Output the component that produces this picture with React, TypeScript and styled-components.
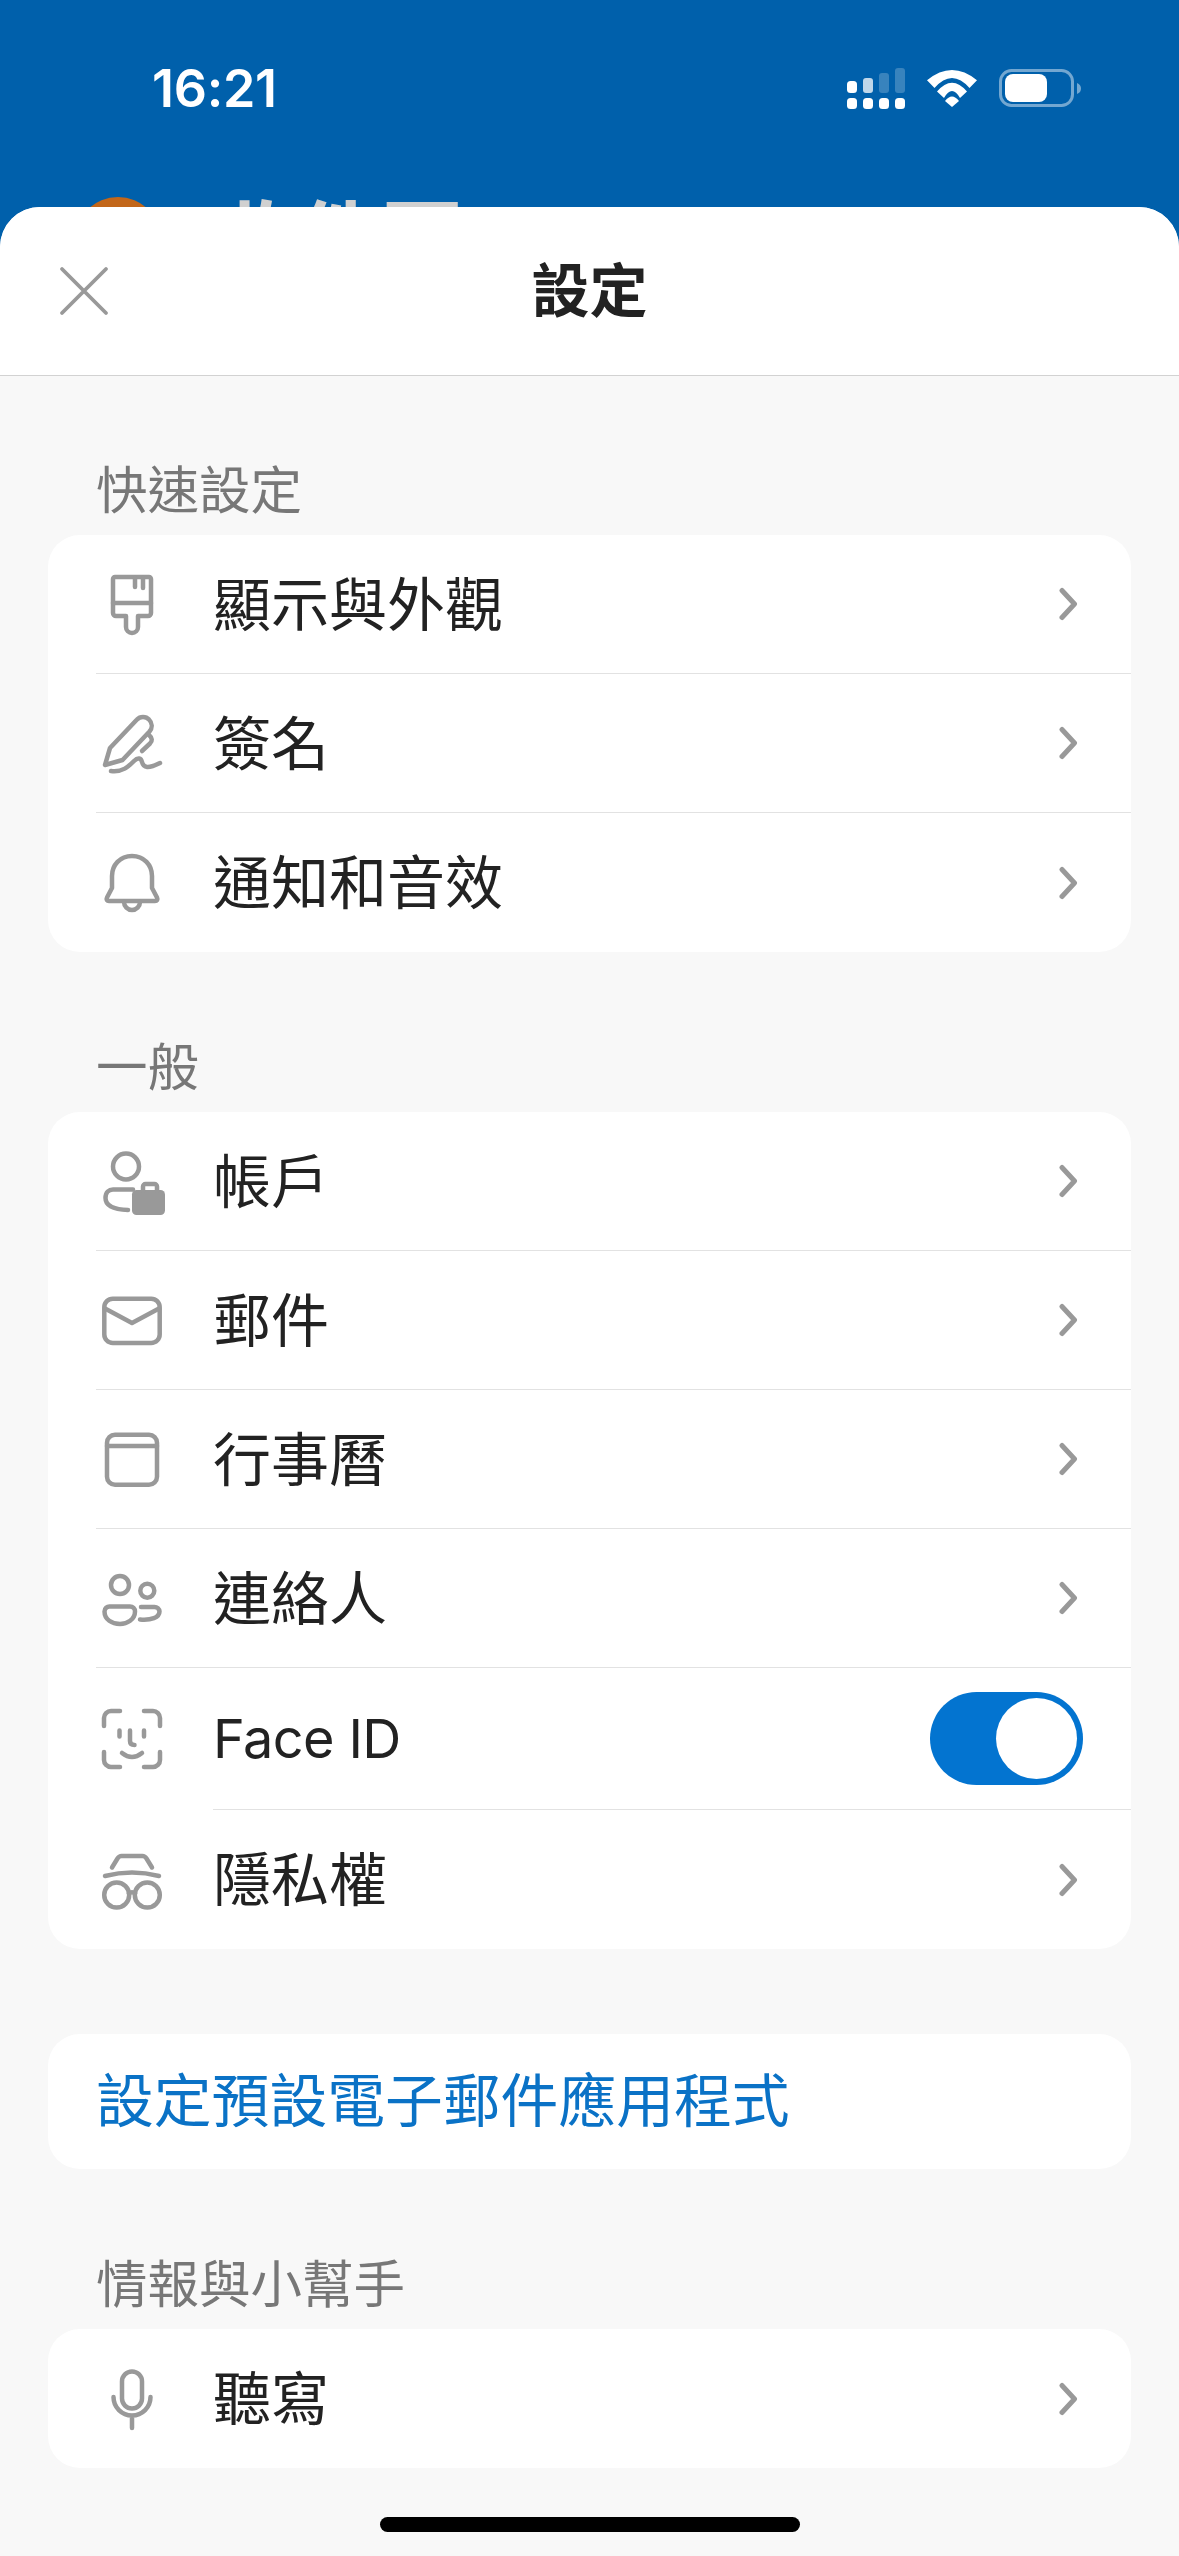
import React from 'react'
import styled, { createGlobalStyle } from 'styled-components'

const GlobalStyle = createGlobalStyle`
  html, body {
    margin: 0;
    padding: 0;
    background: #0060ab;
  }
  * { box-sizing: border-box; }
`

const Page = styled.div`
  position: relative;
  width: 1179px;
  height: 2556px;
  overflow: hidden;
  background: #0060ab;
  font-family: Inter, "Noto Sans CJK TC", sans-serif;
`

const TopBar = styled.div`
  height: 207px;
  overflow: hidden;
  padding-top: 58px;
`

const StatusBar = styled.div`
  display: flex;
  align-items: center;
  justify-content: space-between;
  height: 60px;
  padding: 0 98px 0 152px;
`

const Time = styled.span`
  padding-top: 2px;
  color: #fff;
  font-size: 52px;
  font-weight: 600;
  letter-spacing: -0.3px;
  line-height: 60px;
`

const StatusIcons = styled.div`
  display: flex;
  align-items: center;
  gap: 22px;
`

const AccountPeek = styled.div`
  display: flex;
  align-items: flex-start;
  gap: 53px;
  margin-top: 79px;
  padding-left: 75px;
`

const Avatar = styled.div`
  width: 86px;
  height: 86px;
  border-radius: 50%;
  background: #c26619;
`

const PeekTitle = styled.span`
  color: #d0d0d0;
  font-size: 83px;
  font-weight: 700;
  line-height: 83px;
  margin-top: 2px;
`

const Sheet = styled.div`
  height: 2349px;
  border-radius: 40px 40px 0 0;
  background: #f8f8f8;
  overflow: hidden;
`

const SheetHeader = styled.header`
  display: grid;
  grid-template-columns: 1fr auto 1fr;
  align-items: center;
  height: 169px;
  background: #fff;
  border-bottom: 1px solid #d2d2d2;
`

const CloseIcon = styled.svg`
  width: 50px;
  height: 50px;
  margin-left: 59px;
  stroke: #999;
  stroke-width: 3.8;
  stroke-linecap: round;
  fill: none;
`

const SheetTitle = styled.h1`
  margin: 0;
  color: #222;
  font-size: 58px;
  font-weight: 700;
  line-height: 70px;
`

const Content = styled.div`
  display: flex;
  flex-direction: column;
  padding: 83px 48px 0;
`

const SectionLabel = styled.div`
  height: 60px;
  margin: 0 0 16px 48px;
  padding-top: 1px;
  color: #777;
  font-size: 51.5px;
  line-height: 60px;
`

const Card = styled.div<{ $gap?: number }>`
  display: flex;
  flex-direction: column;
  margin-bottom: ${p => p.$gap ?? 84}px;
  border-radius: 32px;
  background: #fff;
`

const Row = styled.div<{ $tall?: boolean }>`
  display: flex;
  align-items: center;
  height: ${p => (p.$tall ? 141 : 138)}px;
  padding: 0 48px;
  &:last-child { height: 139px; }
`

const Separator = styled.div<{ $inset: number }>`
  height: 1px;
  margin-left: ${p => p.$inset}px;
  background: #e2e2e2;
`

const IconBox = styled.svg`
  flex: none;
  width: 72px;
  height: 72px;
  margin-right: 45px;
  stroke: #999;
  stroke-width: 4.5;
  stroke-linecap: round;
  stroke-linejoin: round;
  fill: none;
`

const RowLabel = styled.span`
  flex: 1;
  padding-top: 1px;
  color: #222;
  font-size: 58px;
  line-height: 70px;
`

const LatinLabel = styled(RowLabel)`
  padding-top: 0;
  font-size: 54px;
  letter-spacing: -0.6px;
`

const Chevron = styled.svg`
  flex: none;
  width: 24px;
  height: 36px;
  stroke: #999;
  stroke-width: 5;
  stroke-linecap: round;
  stroke-linejoin: round;
  fill: none;
`

const Toggle = styled.div`
  display: flex;
  justify-content: flex-end;
  width: 153px;
  height: 93px;
  padding: 6px;
  border-radius: 47px;
  background: #0374d0;
`

const ToggleKnob = styled.div`
  width: 81px;
  height: 81px;
  border-radius: 50%;
  background: #fff;
`

const LinkRow = styled.div`
  height: 135px;
  padding-left: 48px;
  color: #0a72c6;
  font-size: 57.8px;
  line-height: 135px;
`

const HomeIndicator = styled.div`
  position: absolute;
  left: 380px;
  bottom: 24px;
  width: 420px;
  height: 15px;
  border-radius: 8px;
  background: #000;
`

const SignalIcon = () => (
  <svg width="58" height="41" viewBox="0 0 58 41" fill="#fff">
    <rect x="0" y="30" width="10" height="11" rx="3.5" />
    <rect x="16" y="30" width="10" height="11" rx="3.5" />
    <rect x="32" y="30" width="10" height="11" rx="3.5" />
    <rect x="48" y="30" width="10" height="11" rx="3.5" />
    <rect x="0" y="13" width="10" height="12" rx="3.5" />
    <rect x="16" y="10" width="10" height="15" rx="3" opacity="0.75" />
    <rect x="32" y="5" width="10" height="20" rx="3" opacity="0.22" />
    <rect x="48" y="0" width="10" height="25" rx="3" opacity="0.22" />
  </svg>
)

const WifiIcon = () => (
  <svg width="50" height="37" viewBox="0 0 50 37" fill="#fff">
    <path d="M0 10.3Q25-10.3 50 10.3L42.5 18Q25-2 7.5 18Z" />
    <path d="M10 21.5Q25 3.8 40 21.5L33 28Q25 14 17 28Z" />
    <path d="M18 31Q25 22 32 31L25 37Z" />
  </svg>
)

const BatteryIcon = () => (
  <svg width="82" height="38" viewBox="0 0 82 38" fill="none">
    <rect x="1.5" y="1.5" width="72" height="35" rx="11" stroke="#fff" strokeOpacity="0.45" strokeWidth="3" />
    <rect x="6" y="5" width="42" height="28" rx="8" fill="#fff" />
    <path d="M78 14Q82 15.5 82 19.5T78 25Z" fill="#fff" fillOpacity="0.45" />
  </svg>
)

const icons = {
  brush: (
    <>
      <path d="M19 9H53a2 2 0 0 1 2 2V45a3 3 0 0 1-3 3H42V59a6 6 0 0 1-12 0V48H20a3 3 0 0 1-3-3V11a2 2 0 0 1 2-2Z" />
      <path d="M17 35H55M39 10V19M47 10V20" />
    </>
  ),
  signature: (
    <>
      <path d="M9 58L14 41L41 12.5C44 9 50 9 53 12.5C56.5 16 56.5 21 53.5 24.5L26.5 53Z" />
      <path d="M53 28C56.5 31 56.5 34 54 36.5L46 44" />
      <path d="M15 64C27 65.5 33 59 38 54C42 50 45 51 46 55C47.5 61 52 62 64 56" />
    </>
  ),
  bell: (
    <>
      <path d="M36 9C24 9 16 18 16 29V41L11 50.5C10 52.5 11 54 13 54H59C61 54 62 52.5 61 50.5L56 41V29C56 18 48 9 36 9Z" />
      <path d="M28 55A8 8 0 0 0 44 55" />
    </>
  ),
  account: (
    <>
      <circle cx="30" cy="21.5" r="13" />
      <path d="M37 44.5H17C13 44.5 9.5 47 9.5 53C9.5 60 17 64.5 32 65" />
      <rect x="36" y="45" width="33" height="25" rx="4.5" fill="#999" stroke="none" />
      <path d="M47 46V41.5A2.5 2.5 0 0 1 49.5 39H58.5A2.5 2.5 0 0 1 61 41.5V46" />
    </>
  ),
  mail: (
    <>
      <rect x="8.3" y="14.7" width="55.4" height="44.3" rx="8.5" />
      <path d="M9 24.5L36 39L63 24.5" />
    </>
  ),
  calendar: (
    <>
      <rect x="11" y="11.7" width="50" height="50" rx="8" />
      <path d="M11 23H61" />
    </>
  ),
  contacts: (
    <>
      <circle cx="24" cy="23" r="9" />
      <path d="M14 44.5H34A5 5 0 0 1 39 49.5C39 57.5 31 62 24 62C16 62 8.5 57.5 8.5 49.5A5 5 0 0 1 14 44.5Z" />
      <circle cx="51.3" cy="28.7" r="7" />
      <path d="M45 45H58.500A5 5 0 0 1 63.500 49.500C63.500 55.500 55 58.500 44 57.500" />
    </>
  ),
  faceId: (
    <>
      <path d="M24 8H15A7 7 0 0 0 8 15V23M48 8H57A7 7 0 0 1 64 15V23M24 64H15A7 7 0 0 1 8 57V49M48 64H57A7 7 0 0 0 64 57V49" />
      <path d="M23.500 27.500V33.500M48 27.500V33.500M34 27.500V38C34 41 36 42 38.500 42" />
      <path d="M26 50Q36 58 46 50" />
    </>
  ),
  privacy: (
    <>
      <path d="M16 23.500L21.500 14.500C22.500 13 23.500 12 25.500 12H46.500C48.500 12 49.500 13 50.500 14.500L56 23.500" />
      <path d="M9 32Q36 25 63 32" />
      <circle cx="20.700" cy="51" r="12.500" />
      <circle cx="51.300" cy="51" r="12.500" />
      <path d="M33 49.500Q36 47 39 49.500" />
    </>
  ),
  mic: (
    <>
      <rect x="26" y="8.500" width="20" height="37" rx="10" />
      <path d="M17.500 34A18.500 18.500 0 0 0 54.500 34M36 55V65" />
    </>
  ),
}

type IconName = keyof typeof icons

const RowIcon = ({ name }: { name: IconName }) => (
  <IconBox viewBox="0 0 72 72">{icons[name]}</IconBox>
)

const NavRow = ({ icon, label }: { icon: IconName; label: string }) => (
  <Row>
    <RowIcon name={icon} />
    <RowLabel>{label}</RowLabel>
    <Chevron viewBox="0 0 24 36">
      <path d="M3 4.500L15.500 18L3 31.500" />
    </Chevron>
  </Row>
)

export default function App() {
  return (
    <Page>
      <GlobalStyle />
      <TopBar>
        <StatusBar>
          <Time>16:21</Time>
          <StatusIcons>
            <SignalIcon />
            <WifiIcon />
            <BatteryIcon />
          </StatusIcons>
        </StatusBar>
        <AccountPeek>
          <Avatar />
          <PeekTitle>收件匣</PeekTitle>
        </AccountPeek>
      </TopBar>

      <Sheet>
        <SheetHeader>
          <CloseIcon viewBox="0 0 50 50">
            <path d="M3 3L47 47M47 3L3 47" />
          </CloseIcon>
          <SheetTitle>設定</SheetTitle>
        </SheetHeader>

        <Content>
          <SectionLabel>快速設定</SectionLabel>
          <Card>
            <NavRow icon="brush" label="顯示與外觀" />
            <Separator $inset={48} />
            <NavRow icon="signature" label="簽名" />
            <Separator $inset={48} />
            <NavRow icon="bell" label="通知和音效" />
          </Card>

          <SectionLabel>一般</SectionLabel>
          <Card $gap={85}>
            <NavRow icon="account" label="帳戶" />
            <Separator $inset={48} />
            <NavRow icon="mail" label="郵件" />
            <Separator $inset={48} />
            <NavRow icon="calendar" label="行事曆" />
            <Separator $inset={48} />
            <NavRow icon="contacts" label="連絡人" />
            <Separator $inset={48} />
            <Row $tall>
              <RowIcon name="faceId" />
              <LatinLabel>Face ID</LatinLabel>
              <Toggle>
                <ToggleKnob />
              </Toggle>
            </Row>
            <Separator $inset={165} />
            <NavRow icon="privacy" label="隱私權" />
          </Card>

          <Card>
            <LinkRow>設定預設電子郵件應用程式</LinkRow>
          </Card>

          <SectionLabel>情報與小幫手</SectionLabel>
          <Card>
            <NavRow icon="mic" label="聽寫" />
          </Card>
        </Content>
      </Sheet>

      <HomeIndicator />
    </Page>
  )
}
